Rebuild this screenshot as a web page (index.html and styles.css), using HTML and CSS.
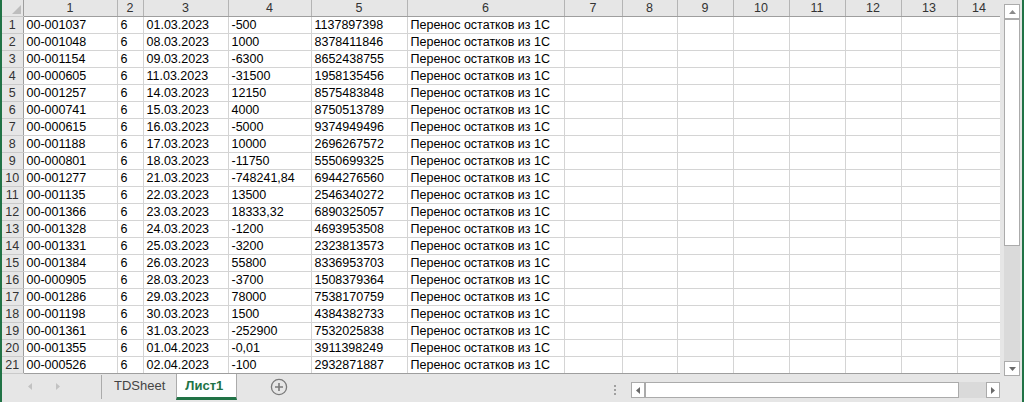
FILE: index.html
```html
<!DOCTYPE html>
<html>
<head>
  <meta charset="UTF-8">
  <title>Лист1</title>
  <link rel="stylesheet" href="styles.css">
</head>
<body>
<div class="window">

  <!-- таблица + вертикальная прокрутка -->
  <div class="sheet">
    <div class="grid">
      <table>
        <colgroup>
          <col style="width:21px"><col style="width:94px"><col style="width:26px"><col style="width:85px">
          <col style="width:83px"><col style="width:96px"><col style="width:157px"><col style="width:58px">
          <col style="width:55px"><col style="width:56px"><col style="width:56px"><col style="width:56px">
          <col style="width:56px"><col style="width:56px"><col style="width:44px">
        </colgroup>
        <tr class="head">
          <th class="corner"><span class="tri"></span></th>
          <th>1</th><th>2</th><th>3</th><th>4</th><th>5</th><th>6</th><th>7</th>
          <th>8</th><th>9</th><th>10</th><th>11</th><th>12</th><th>13</th><th>14</th>
        </tr>
        <tr><th>1</th><td>00-001037</td><td>6</td><td>01.03.2023</td><td>-500</td><td>1137897398</td><td>Перенос остатков из 1С</td><td></td><td></td><td></td><td></td><td></td><td></td><td></td><td></td></tr>
        <tr><th>2</th><td>00-001048</td><td>6</td><td>08.03.2023</td><td>1000</td><td>8378411846</td><td>Перенос остатков из 1С</td><td></td><td></td><td></td><td></td><td></td><td></td><td></td><td></td></tr>
        <tr><th>3</th><td>00-001154</td><td>6</td><td>09.03.2023</td><td>-6300</td><td>8652438755</td><td>Перенос остатков из 1С</td><td></td><td></td><td></td><td></td><td></td><td></td><td></td><td></td></tr>
        <tr><th>4</th><td>00-000605</td><td>6</td><td>11.03.2023</td><td>-31500</td><td>1958135456</td><td>Перенос остатков из 1С</td><td></td><td></td><td></td><td></td><td></td><td></td><td></td><td></td></tr>
        <tr><th>5</th><td>00-001257</td><td>6</td><td>14.03.2023</td><td>12150</td><td>8575483848</td><td>Перенос остатков из 1С</td><td></td><td></td><td></td><td></td><td></td><td></td><td></td><td></td></tr>
        <tr><th>6</th><td>00-000741</td><td>6</td><td>15.03.2023</td><td>4000</td><td>8750513789</td><td>Перенос остатков из 1С</td><td></td><td></td><td></td><td></td><td></td><td></td><td></td><td></td></tr>
        <tr><th>7</th><td>00-000615</td><td>6</td><td>16.03.2023</td><td>-5000</td><td>9374949496</td><td>Перенос остатков из 1С</td><td></td><td></td><td></td><td></td><td></td><td></td><td></td><td></td></tr>
        <tr><th>8</th><td>00-001188</td><td>6</td><td>17.03.2023</td><td>10000</td><td>2696267572</td><td>Перенос остатков из 1С</td><td></td><td></td><td></td><td></td><td></td><td></td><td></td><td></td></tr>
        <tr><th>9</th><td>00-000801</td><td>6</td><td>18.03.2023</td><td>-11750</td><td>5550699325</td><td>Перенос остатков из 1С</td><td></td><td></td><td></td><td></td><td></td><td></td><td></td><td></td></tr>
        <tr><th>10</th><td>00-001277</td><td>6</td><td>21.03.2023</td><td>-748241,84</td><td>6944276560</td><td>Перенос остатков из 1С</td><td></td><td></td><td></td><td></td><td></td><td></td><td></td><td></td></tr>
        <tr><th>11</th><td>00-001135</td><td>6</td><td>22.03.2023</td><td>13500</td><td>2546340272</td><td>Перенос остатков из 1С</td><td></td><td></td><td></td><td></td><td></td><td></td><td></td><td></td></tr>
        <tr><th>12</th><td>00-001366</td><td>6</td><td>23.03.2023</td><td>18333,32</td><td>6890325057</td><td>Перенос остатков из 1С</td><td></td><td></td><td></td><td></td><td></td><td></td><td></td><td></td></tr>
        <tr><th>13</th><td>00-001328</td><td>6</td><td>24.03.2023</td><td>-1200</td><td>4693953508</td><td>Перенос остатков из 1С</td><td></td><td></td><td></td><td></td><td></td><td></td><td></td><td></td></tr>
        <tr><th>14</th><td>00-001331</td><td>6</td><td>25.03.2023</td><td>-3200</td><td>2323813573</td><td>Перенос остатков из 1С</td><td></td><td></td><td></td><td></td><td></td><td></td><td></td><td></td></tr>
        <tr><th>15</th><td>00-001384</td><td>6</td><td>26.03.2023</td><td>55800</td><td>8336953703</td><td>Перенос остатков из 1С</td><td></td><td></td><td></td><td></td><td></td><td></td><td></td><td></td></tr>
        <tr><th>16</th><td>00-000905</td><td>6</td><td>28.03.2023</td><td>-3700</td><td>1508379364</td><td>Перенос остатков из 1С</td><td></td><td></td><td></td><td></td><td></td><td></td><td></td><td></td></tr>
        <tr><th>17</th><td>00-001286</td><td>6</td><td>29.03.2023</td><td>78000</td><td>7538170759</td><td>Перенос остатков из 1С</td><td></td><td></td><td></td><td></td><td></td><td></td><td></td><td></td></tr>
        <tr><th>18</th><td>00-001198</td><td>6</td><td>30.03.2023</td><td>1500</td><td>4384382733</td><td>Перенос остатков из 1С</td><td></td><td></td><td></td><td></td><td></td><td></td><td></td><td></td></tr>
        <tr><th>19</th><td>00-001361</td><td>6</td><td>31.03.2023</td><td>-252900</td><td>7532025838</td><td>Перенос остатков из 1С</td><td></td><td></td><td></td><td></td><td></td><td></td><td></td><td></td></tr>
        <tr><th>20</th><td>00-001355</td><td>6</td><td>01.04.2023</td><td>-0,01</td><td>3911398249</td><td>Перенос остатков из 1С</td><td></td><td></td><td></td><td></td><td></td><td></td><td></td><td></td></tr>
        <tr><th>21</th><td>00-000526</td><td>6</td><td>02.04.2023</td><td>-100</td><td>2932871887</td><td>Перенос остатков из 1С</td><td></td><td></td><td></td><td></td><td></td><td></td><td></td><td></td></tr>
      </table>
    </div>

    <div class="vscroll">
      <div class="sbtn"><svg width="7" height="4" viewBox="0 0 7 4"><path d="M0 4 L3.5 0 L7 4 Z" fill="#8a8a8a"/></svg></div>
      <div class="vthumb"></div>
      <div class="vtrack"></div>
      <div class="sbtn"><svg width="7" height="4" viewBox="0 0 7 4"><path d="M0 0 L7 0 L3.5 4 Z" fill="#6a6a6a"/></svg></div>
    </div>
  </div>

  <!-- ярлыки листов -->
  <div class="tabbar">
    <div class="nav">
      <svg width="4" height="7" viewBox="0 0 4 7"><path d="M4 0 L0 3.5 L4 7 Z" fill="#c2c2c2"/></svg>
      <svg width="4" height="7" viewBox="0 0 4 7"><path d="M0 0 L4 3.5 L0 7 Z" fill="#c2c2c2"/></svg>
    </div>
    <div class="tab">TDSheet</div>
    <div class="tab active">Лист1</div>
    <div class="add">
      <svg width="18" height="18" viewBox="0 0 18 18">
        <circle cx="9" cy="9" r="7.6" fill="none" stroke="#7a7a7a" stroke-width="1.3"/>
        <path d="M9 5 V13 M5 9 H13" stroke="#7a7a7a" stroke-width="1.6"/>
      </svg>
    </div>
    <div class="splitter"><i></i><i></i><i></i></div>
    <div class="hscroll">
      <div class="sbtn"><svg width="4" height="7" viewBox="0 0 4 7"><path d="M4 0 L0 3.5 L4 7 Z" fill="#6a6a6a"/></svg></div>
      <div class="hthumb"></div>
      <div class="htrack"></div>
      <div class="sbtn"><svg width="4" height="7" viewBox="0 0 4 7"><path d="M0 0 L4 3.5 L0 7 Z" fill="#6a6a6a"/></svg></div>
    </div>
  </div>

</div>
</body>
</html>
```

FILE: styles.css
```css
body {
  margin: 0;
  font-family: "Liberation Sans", Arial, sans-serif;
}
.window {
  width: 1024px;
  height: 402px;
  box-sizing: border-box;
  border-left: 2px solid #217346;
  border-right: 2px solid #217346;
  background: #e6e6e6;
  display: flex;
  flex-direction: column;
  overflow: hidden;
}
.sheet {
  display: flex;
  height: 374px;
}
.grid {
  width: 1000px;
  height: 374px;
  overflow: hidden;
  background: #fff;
}
table {
  border-collapse: collapse;
  table-layout: fixed;
  width: 999px;
  font-size: 12.5px;
}
td, th {
  height: 16px;
  padding: 0;
  line-height: 16px;
  white-space: nowrap;
  overflow: hidden;
  box-sizing: border-box;
}
td {
  padding-left: 3px;
  color: #000;
  border-right: 1px solid #d4d4d4;
  border-bottom: 1px solid #d4d4d4;
}
th {
  font-weight: normal;
  color: #333;
  background: #e6e6e6;
  text-align: center;
}
tr th:first-child {
  border-right: 1px solid #9e9e9e;
  border-bottom: 1px solid #cacaca;
}
.head th {
  border-right: 1px solid #b4b4b4;
  border-bottom: 1px solid #9e9e9e;
}
.head th:last-child, tr td:last-child {
  border-right: 1px solid #9e9e9e;
}
tr:last-child td {
  border-bottom: 1px solid #9e9e9e;
}
.corner {
  position: relative;
}
.corner .tri {
  position: absolute;
  right: 2px;
  bottom: 2px;
  width: 0;
  height: 0;
  border-left: 9px solid transparent;
  border-bottom: 9px solid #bdbdbd;
}

/* вертикальная полоса прокрутки */
.vscroll {
  width: 16px;
  margin: 4px 2px 0 4px;
  height: 372px;
  display: flex;
  flex-direction: column;
}
.sbtn {
  width: 16px;
  height: 15px;
  box-sizing: border-box;
  border: 1px solid #ababab;
  background: #fff;
  display: flex;
  align-items: center;
  justify-content: center;
  flex-shrink: 0;
}
.vthumb {
  height: 227px;
  box-sizing: border-box;
  border: 1px solid #ababab;
  background: #fff;
}
.vtrack {
  flex: 1;
  background: #dadada;
}

/* ярлыки */
.tabbar {
  flex: 1;
  display: flex;
  align-items: flex-start;
}
.nav {
  width: 99px;
  height: 24px;
  display: flex;
  align-items: center;
  gap: 24px;
  padding-left: 26px;
  box-sizing: border-box;
}
.tab {
  height: 24px;
  margin-top: 1px;
  box-sizing: border-box;
  padding: 0 11px 0 12px;
  font-size: 13px;
  line-height: 22px;
  color: #444;
  border-left: 1px solid #ababab;
}
.tab.active {
  margin-top: 0;
  height: 26px;
  width: 61px;
  padding: 1px 0 0 8px;
  background: #fff;
  color: #217346;
  font-weight: bold;
  border-right: 1px solid #ababab;
  border-bottom: 3px solid #217346;
}
.add {
  margin: 4px 0 0 33px;
  height: 18px;
}
.splitter {
  margin: 11px 0 0 326px;
  display: flex;
  flex-direction: column;
  gap: 2px;
}
.splitter i {
  display: block;
  width: 2px;
  height: 2px;
  background: #a0a0a0;
}
.hscroll {
  margin: 8px 0 0 15px;
  width: 369px;
  height: 16px;
  display: flex;
}
.hscroll .sbtn {
  width: 14px;
  height: 16px;
}
.hthumb {
  width: 314px;
  box-sizing: border-box;
  border: 1px solid #ababab;
  background: #fff;
}
.htrack {
  flex: 1;
  background: #dadada;
}
```
